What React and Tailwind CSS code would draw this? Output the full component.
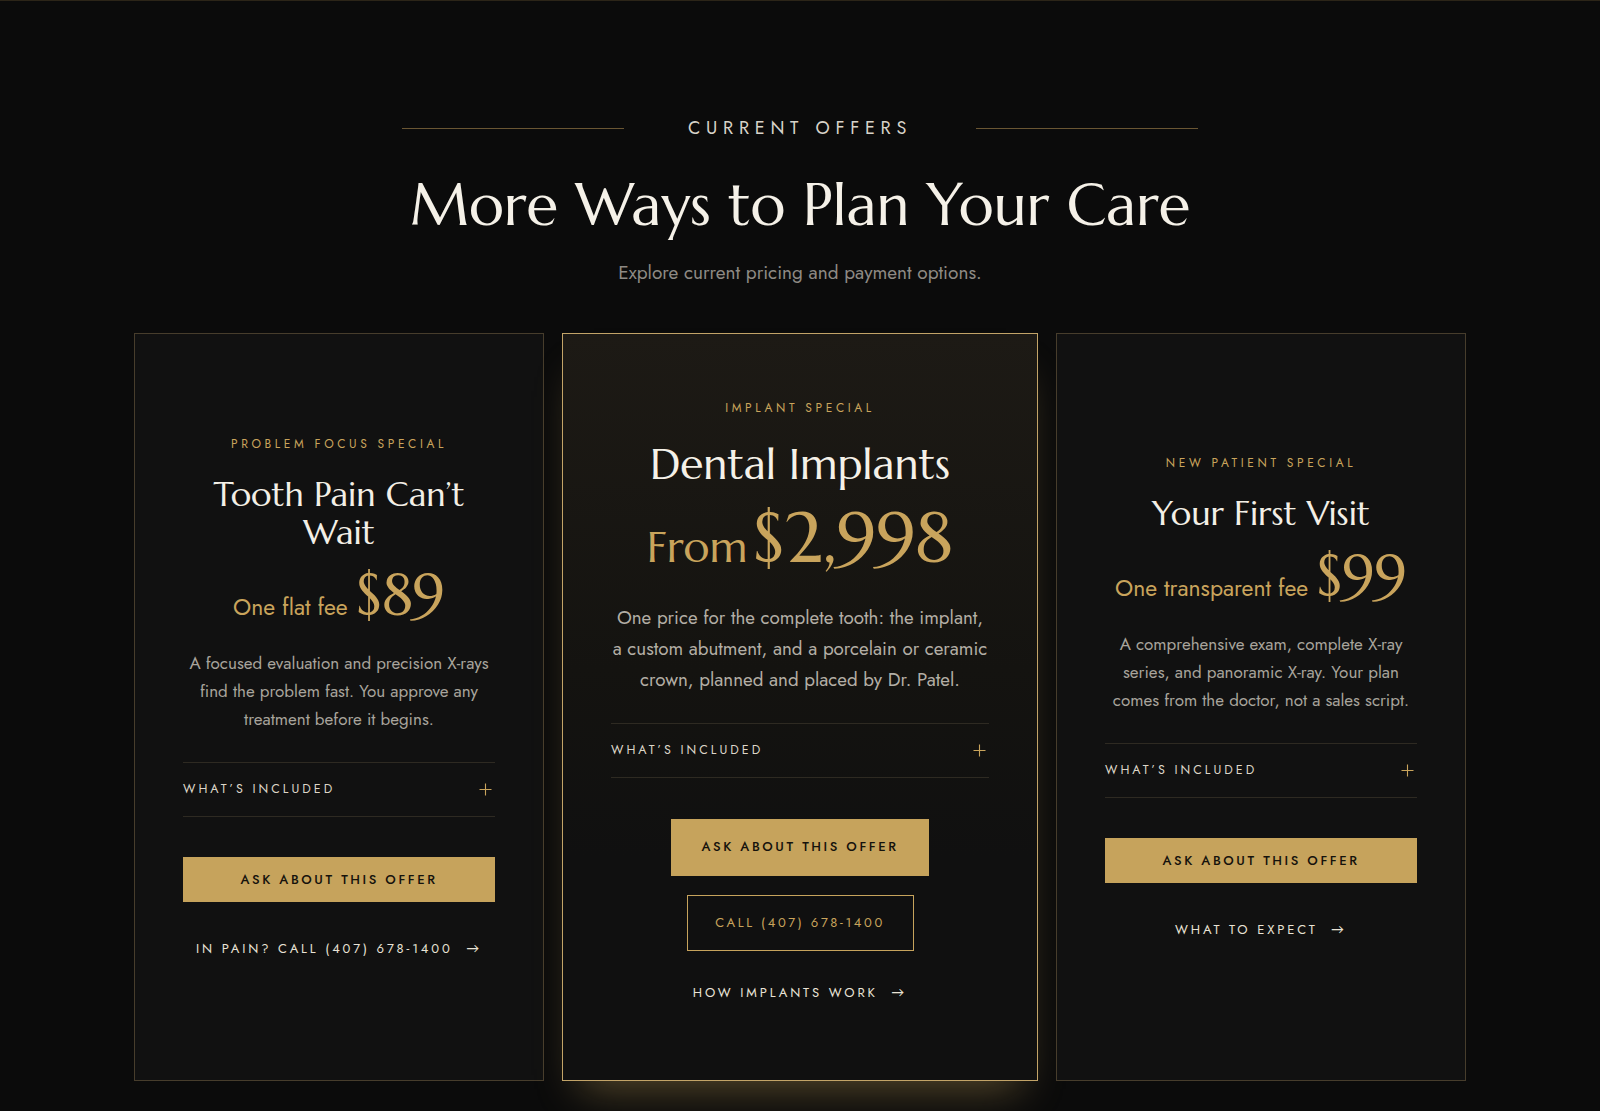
import React from "react";

const serif = "font-['Marcellus','Liberation_Serif',serif]";
const sans = "font-['Jost','Lato',sans-serif]";

function Plus() {
  return (
    <svg width="13" height="13" viewBox="0 0 13 13" className="shrink-0 mr-[3px]">
      <path d="M6.5 0.5V12.5M0.5 6.5H12.5" stroke="#c9a45c" strokeWidth="1.1" />
    </svg>
  );
}

function Included() {
  return (
    <div className="w-full border-t border-b border-[#2e2a22] h-[55px] flex items-center justify-between">
      <span className={`${sans} text-[12.5px] tracking-[0.24em] text-[#ddd6c8]`}>WHAT’S INCLUDED</span>
      <Plus />
    </div>
  );
}

function SideCard({ label, title, fee, price, desc, link }) {
  return (
    <div className="w-[410px] h-[748px] bg-[#111111] border border-[#473d2c] flex flex-col items-center justify-center px-12 pb-[21px] text-center">
      <div className={`${sans} text-[12px] leading-[18px] tracking-[0.3em] text-[#c9a45c]`}>{label}</div>
      <h3 className={`${serif} mt-[23px] text-[34px] leading-[38px] text-[#f3efe6] max-w-[260px]`}>{title}</h3>
      <div className="mt-[11px] flex items-baseline justify-center gap-[8px] text-[#c9a45c]">
        <span className={`${sans} text-[23px]`}>{fee}</span>
        <span className={`${serif} text-[58px] leading-[64px]`}>{price}</span>
      </div>
      <p className={`${sans} mt-[22px] text-[17px] leading-[28px] text-[#a8a49c]`}>{desc}</p>
      <div className="mt-[29px] w-full">
        <Included />
      </div>
      <button className={`${sans} mt-[40px] w-full h-[45px] bg-[#c6a35c] text-[#15120c] text-[13px] font-medium tracking-[0.2em]`}>
        ASK ABOUT THIS OFFER
      </button>
      <div className={`${sans} mt-[38px] text-[13px] leading-[18px] tracking-[0.22em] text-[#e9e3d6]`}>{link}&nbsp;&nbsp;→</div>
    </div>
  );
}

function MiddleCard() {
  return (
    <div className="w-[476px] h-[748px] border border-[#c3a468] bg-[linear-gradient(180deg,#1d1a15_0%,#141310_45%,#101010_70%,#101010_100%)] flex flex-col items-center justify-center px-12 pb-[14px] text-center shadow-[0_26px_40px_-18px_rgba(201,164,92,0.4)]">
      <div className={`${sans} text-[12px] leading-[18px] tracking-[0.3em] text-[#c9a45c]`}>IMPLANT SPECIAL</div>
      <h3 className={`${serif} mt-[23px] text-[42.5px] leading-[50px] text-[#f5f1e8]`}>Dental Implants</h3>
      <div className="mt-[6px] flex items-baseline justify-center gap-[5px] text-[#c9a45c]">
        <span className={`${serif} text-[43px]`}>From</span>
        <span className={`${serif} text-[71px] leading-[84px]`}>$2,998</span>
      </div>
      <p className={`${sans} mt-[22px] text-[18.8px] leading-[31px] text-[#b3aea5]`}>
        One price for the complete tooth: the implant, a custom abutment, and a porcelain or ceramic crown, planned and placed by Dr. Patel.
      </p>
      <div className="mt-[28px] w-full">
        <Included />
      </div>
      <button className={`${sans} mt-[41px] w-[258px] h-[57px] bg-[#c6a35c] text-[#15120c] text-[13px] font-medium tracking-[0.2em]`}>
        ASK ABOUT THIS OFFER
      </button>
      <button className={`${sans} mt-[19px] w-[227px] h-[56px] border border-[#c6a35c] text-[#c9a45c] text-[13px] tracking-[0.2em]`}>
        CALL (407) 678-1400
      </button>
      <div className={`${sans} mt-[33px] text-[13px] leading-[18px] tracking-[0.22em] text-[#e9e3d6]`}>HOW IMPLANTS WORK&nbsp;&nbsp;→</div>
    </div>
  );
}

export default function App() {
  return (
    <div className="min-h-[1111px] bg-[#0b0b0b] border-t border-[#2c2518] flex flex-col items-center">
      <div className="mt-[114px] flex items-center gap-16">
        <div className="w-[222px] h-px bg-[#6a5633]" />
        <div className={`${sans} text-[18px] leading-[26px] tracking-[0.32em] text-[#d8d3c9]`}>CURRENT OFFERS</div>
        <div className="w-[222px] h-px bg-[#6a5633]" />
      </div>
      <h1 className={`${serif} mt-[31px] text-[58px] leading-[66px] text-[#f5f1e8]`}>More Ways to Plan Your Care</h1>
      <p className={`${sans} mt-[21px] text-[19px] leading-[28px] text-[#8e8a84]`}>Explore current pricing and payment options.</p>
      <div className="mt-[46px] flex items-start gap-[18px]">
        <SideCard
          label="PROBLEM FOCUS SPECIAL"
          title="Tooth Pain Can’t Wait"
          fee="One flat fee"
          price="$89"
          desc="A focused evaluation and precision X-rays find the problem fast. You approve any treatment before it begins."
          link="IN PAIN? CALL (407) 678-1400"
        />
        <MiddleCard />
        <SideCard
          label="NEW PATIENT SPECIAL"
          title="Your First Visit"
          fee="One transparent fee"
          price="$99"
          desc="A comprehensive exam, complete X-ray series, and panoramic X-ray. Your plan comes from the doctor, not a sales script."
          link="WHAT TO EXPECT"
        />
      </div>
    </div>
  );
}
